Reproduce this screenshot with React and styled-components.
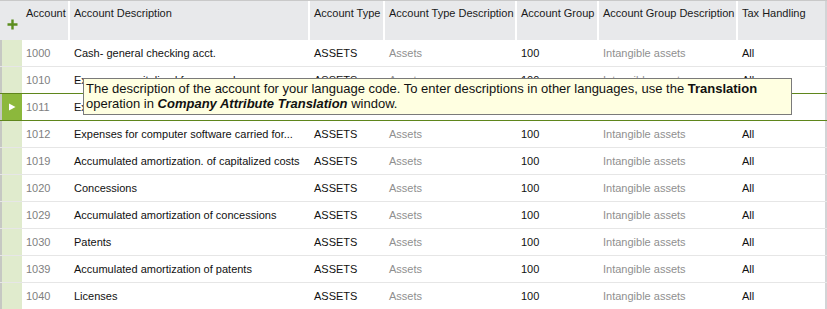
import styled, { createGlobalStyle } from "styled-components";

const Global = createGlobalStyle`
  html, body {
    margin: 0;
    padding: 0;
    background: #fff;
    overflow: hidden;
  }
  body {
    font-family: "Liberation Sans", Arial, sans-serif;
  }
`;

const COLS = [
  { key: "acc", title: "Account", width: 48, tone: "muted" },
  { key: "desc", title: "Account Description", width: 240 },
  { key: "type", title: "Account Type", width: 75 },
  { key: "typeDesc", title: "Account Type Description", width: 132, tone: "light" },
  { key: "group", title: "Account Group", width: 82 },
  { key: "groupDesc", title: "Account Group Description", width: 139, tone: "light" },
  { key: "tax", title: "Tax Handling", width: 87, last: true },
];

const rows = [
  ["1000", "Cash- general checking acct."],
  ["1010", "Expenses capitalized for research"],
  ["1011", "Expenses capitalized for development"],
  ["1012", "Expenses for computer software carried for..."],
  ["1019", "Accumulated amortization. of capitalized costs"],
  ["1020", "Concessions"],
  ["1029", "Accumulated amortization of concessions"],
  ["1030", "Patents"],
  ["1039", "Accumulated amortization of patents"],
  ["1040", "Licenses"],
].map(([acc, desc]) => ({
  acc,
  desc,
  type: "ASSETS",
  typeDesc: "Assets",
  group: "100",
  groupDesc: "Intangible assets",
  tax: "All",
}));

const Grid = styled.div`
  position: relative;
  width: 827px;
  height: 309px;
  overflow: hidden;
  font-size: 11px;
  color: #111;
`;

const HeaderRow = styled.div`
  display: flex;
  height: 40px;
  background: #e8e9eb;
  border-top: 1px solid #c9c9c9;
  box-sizing: border-box;
`;

const Gutter = styled.div`
  width: 22px;
  flex: none;
  display: flex;
  align-items: center;
  justify-content: center;
  box-sizing: border-box;
  border-left: 2px solid ${({ $head }) => ($head ? "#e8e9eb" : "#c6c8c3")};
  background: ${({ $head, $active }) =>
    $head ? "#e8e9eb" : $active ? "#8cb83c" : "#e0ebcd"};
`;

const HeadCell = styled.div`
  width: ${({ $w }) => $w}px;
  flex: none;
  box-sizing: border-box;
  padding: 6px 0 0 4px;
  border-right: ${({ $last }) => ($last ? "none" : "2px solid #fff")};
  white-space: nowrap;
  overflow: hidden;
  font-size: 11px;
  color: #1a1a1a;
`;

const EdgeStrip = styled.div`
  flex: 1;
  background: #d3d4d6;
`;

const Row = styled.div`
  display: flex;
  height: 27px;
  box-sizing: border-box;
  border-bottom: 1px solid ${({ $active }) => ($active ? "#5f861c" : "#e6e6e6")};
  ${({ $active }) => $active && "border-top: 1px solid #5f861c; margin-top: -1px; height: 28px;"}
`;

const Cell = styled.div`
  width: ${({ $w }) => $w}px;
  flex: none;
  box-sizing: border-box;
  padding-left: 4px;
  display: flex;
  align-items: center;
  white-space: nowrap;
  overflow: hidden;
  color: ${({ $tone }) =>
    $tone === "muted" ? "#808080" : $tone === "light" ? "#8f8f8f" : "#111"};
`;

const Tooltip = styled.div`
  position: absolute;
  left: 83px;
  top: 78px;
  width: 709px;
  height: 37px;
  box-sizing: border-box;
  padding: 2px 2px 0;
  background: #ffffe1;
  border: 1px solid #7a7a7a;
  font-size: 13px;
  line-height: 15px;
  color: #111;
  b {
    font-weight: bold;
  }
`;

const Plus = () => (
  <svg width="11" height="11" viewBox="0 0 11 11" style={{ marginTop: 7 }}>
    <path d="M5.5 0.5v10M0.5 5.5h10" stroke="#5b8d1e" strokeWidth="2.4" />
  </svg>
);

const Arrow = () => (
  <svg width="8" height="8" viewBox="0 0 8 8">
    <path d="M1 0.5L7.5 4L1 7.5Z" fill="#fff" />
  </svg>
);

export default function App() {
  return (
    <Grid>
      <Global />
      <HeaderRow>
        <Gutter $head>
          <Plus />
        </Gutter>
        {COLS.map((c) => (
          <HeadCell key={c.key} $w={c.width} $last={c.last}>
            {c.title}
          </HeadCell>
        ))}
        <EdgeStrip />
      </HeaderRow>
      {rows.map((r, i) => {
        const active = i === 2;
        return (
          <Row key={r.acc} $active={active}>
            <Gutter $active={active}>{active && <Arrow />}</Gutter>
            {COLS.map((c) => (
              <Cell key={c.key} $w={c.width} $tone={c.tone}>
                {r[c.key]}
              </Cell>
            ))}
            <EdgeStrip />
          </Row>
        );
      })}
      <Tooltip>
        The description of the account for your language code. To enter descriptions in other
        languages, use the <b>Translation</b> operation in{" "}
        <b>
          <i>Company Attribute Translation</i>
        </b>{" "}
        window.
      </Tooltip>
    </Grid>
  );
}
